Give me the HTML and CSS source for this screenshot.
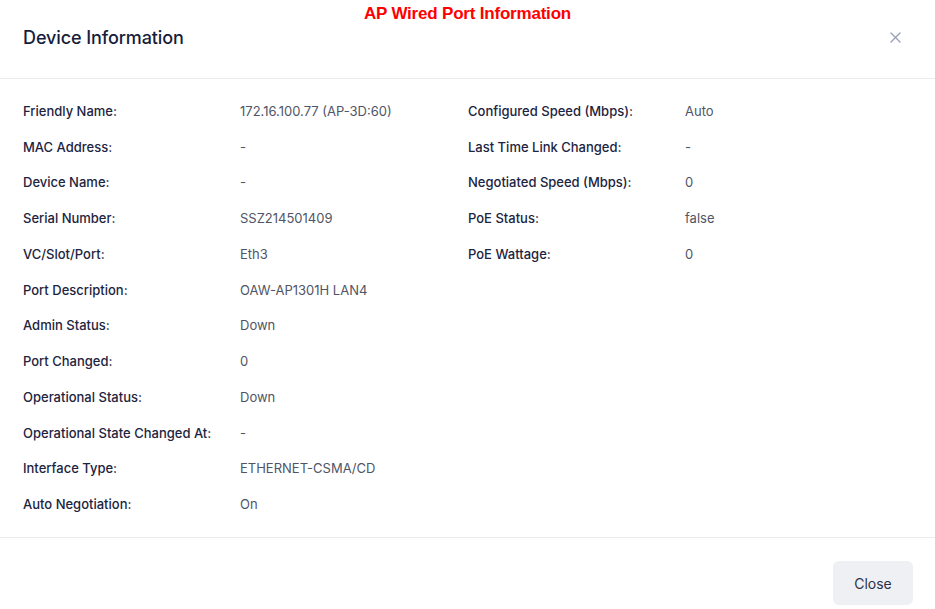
FILE: index.html
```html
<!DOCTYPE html>
<html lang="en">
<head>
    <meta charset="UTF-8">
    <meta name="viewport" content="width=device-width, initial-scale=1.0">
    <title>Device Information</title>
    <link rel="stylesheet" href="styles.css">
</head>
<body>

    <div class="modal">
        <!-- annotation over the screenshot -->
        <div class="caption">AP Wired Port Information</div>

        <!-- Header -->
        <div class="modal-header">
            <h1>Device Information</h1>
            <button class="close-x" type="button" aria-label="Close">
                <svg width="11" height="11" viewBox="0 0 11 11">
                    <path d="M1 1 L10 10 M10 1 L1 10" stroke="#9aa0b6" stroke-width="1.4" stroke-linecap="round"/>
                </svg>
            </button>
        </div>

        <!-- Body -->
        <div class="modal-body">
            <div class="info-grid">
                <div class="label">Friendly Name:</div>
                <div class="value">172.16.100.77 (AP-3D:60)</div>
                <div class="label">Configured Speed (Mbps):</div>
                <div class="value">Auto</div>

                <div class="label">MAC Address:</div>
                <div class="value">-</div>
                <div class="label">Last Time Link Changed:</div>
                <div class="value">-</div>

                <div class="label">Device Name:</div>
                <div class="value">-</div>
                <div class="label">Negotiated Speed (Mbps):</div>
                <div class="value">0</div>

                <div class="label">Serial Number:</div>
                <div class="value">SSZ214501409</div>
                <div class="label">PoE Status:</div>
                <div class="value">false</div>

                <div class="label">VC/Slot/Port:</div>
                <div class="value">Eth3</div>
                <div class="label">PoE Wattage:</div>
                <div class="value">0</div>

                <div class="label">Port Description:</div>
                <div class="value">OAW-AP1301H LAN4</div>
                <div></div><div></div>

                <div class="label">Admin Status:</div>
                <div class="value">Down</div>
                <div></div><div></div>

                <div class="label">Port Changed:</div>
                <div class="value">0</div>
                <div></div><div></div>

                <div class="label">Operational Status:</div>
                <div class="value">Down</div>
                <div></div><div></div>

                <div class="label">Operational State Changed At:</div>
                <div class="value">-</div>
                <div></div><div></div>

                <div class="label">Interface Type:</div>
                <div class="value">ETHERNET-CSMA/CD</div>
                <div></div><div></div>

                <div class="label">Auto Negotiation:</div>
                <div class="value">On</div>
                <div></div><div></div>
            </div>
        </div>

        <!-- Footer -->
        <div class="modal-footer">
            <button class="btn-close" type="button">Close</button>
        </div>
    </div>

</body>
</html>
```

FILE: styles.css
```css
* {
    margin: 0;
    padding: 0;
    box-sizing: border-box;
}

body {
    font-family: 'Inter', 'Noto Sans', sans-serif;
    background-color: #fff;
    width: 935px;
    height: 609px;
    overflow: hidden;
}

.modal {
    position: relative;
    background-color: #fff;
    height: 609px;
}

.caption {
    position: absolute;
    top: 4px;
    left: 0;
    right: 0;
    text-align: center;
    font-family: 'Liberation Sans', Arial, sans-serif;
    font-weight: bold;
    font-size: 17px;
    color: #ff0000;
    letter-spacing: -0.2px;
}

/* Header */
.modal-header {
    display: flex;
    justify-content: space-between;
    align-items: center;
    height: 79px;
    padding: 0 34px 4px 23px;
    border-bottom: 1px solid #ebebee;
}

.modal-header h1 {
    font-size: 18px;
    font-weight: 500;
    color: #161d3c;
    letter-spacing: -0.1px;
}

.close-x {
    background: none;
    border: none;
    display: flex;
    cursor: pointer;
}

/* Body */
.modal-body {
    padding: 14px 23px 0 23px;
    height: 459px;
    border-bottom: 1px solid #ebebee;
}

.info-grid {
    display: grid;
    grid-template-columns: 217px 228px 217px 1fr;
    grid-auto-rows: 35.75px;
    align-items: center;
    font-size: 13px;
}

.label {
    font-weight: 500;
    color: #1c2440;
}

.value {
    color: #4f5566;
}

/* Footer */
.modal-footer {
    display: flex;
    justify-content: flex-end;
    padding: 23px 22px 0 0;
}

.btn-close {
    width: 80px;
    height: 44px;
    border: none;
    border-radius: 6px;
    background-color: #eff0f3;
    font-family: 'Inter', 'Noto Sans', sans-serif;
    font-size: 14px;
    color: #2a3149;
    cursor: pointer;
}
```
